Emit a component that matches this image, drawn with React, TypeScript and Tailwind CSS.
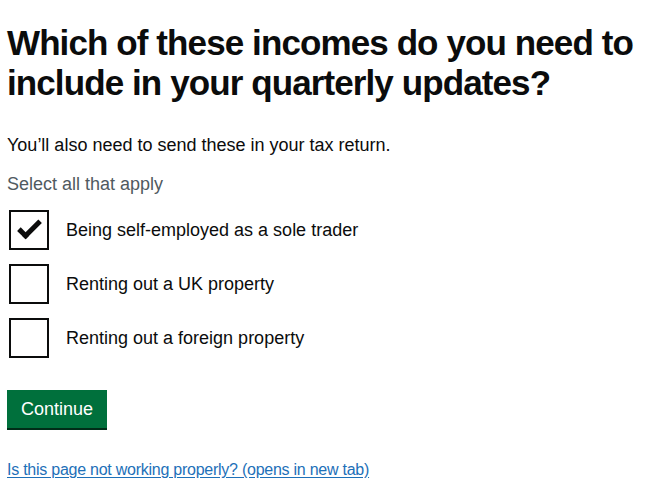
import { useState } from 'react'

const options = [
  { id: 'self-employment', label: 'Being self-employed as a sole trader' },
  { id: 'uk-property', label: 'Renting out a UK property' },
  { id: 'foreign-property', label: 'Renting out a foreign property' },
]

const Checkbox = ({
  label,
  checked,
  onToggle,
}: {
  label: string
  checked: boolean
  onToggle: () => void
}) => (
  <label className="flex cursor-pointer items-center" onClick={onToggle}>
    <span className="relative ml-[2px] h-10 w-10 shrink-0 border-2 border-[#0b0c0c] bg-white">
      {checked && (
        <span className="absolute left-[7px] top-[9px] h-3 w-[23px] -rotate-45 border-b-[5px] border-l-[5px] border-[#0b0c0c]" />
      )}
    </span>
    <span className="ml-[17px] text-[18px] leading-[25px] text-[#0b0c0c]">{label}</span>
  </label>
)

export default function App() {
  const [selected, setSelected] = useState<string[]>(['self-employment'])

  const toggle = (id: string) =>
    setSelected((s) => (s.includes(id) ? s.filter((x) => x !== id) : [...s, id]))

  return (
    <main
      className="min-h-screen bg-white px-[7px] pt-[23px] text-[#0b0c0c]"
      style={{ fontFamily: '"Liberation Sans", Arial, sans-serif' }}
    >
      <h1 className="mb-[30px] text-[35px] font-bold leading-[40px] tracking-[-0.9px]">
        Which of these incomes do you need to include in your quarterly updates?
      </h1>
      <p className="mb-[14px] text-[18px] leading-[25px]">
        You’ll also need to send these in your tax return.
      </p>
      <div className="mb-[13px] text-[18px] leading-[25px] text-[#505a5f]">Select all that apply</div>
      <div className="flex flex-col gap-[14px]">
        {options.map((o) => (
          <Checkbox
            key={o.id}
            label={o.label}
            checked={selected.includes(o.id)}
            onToggle={() => toggle(o.id)}
          />
        ))}
      </div>
      <button className="mt-[32px] block h-[38px] bg-[#00703c] px-[14px] text-[18px] leading-[18px] text-white shadow-[0_2px_0_#002d18]">
        Continue
      </button>
      <a
        href="#"
        className="mt-[32px] block w-fit text-[16px] leading-[20px] tracking-[-0.25px] text-[#1d70b8] underline underline-offset-[2px]"
      >
        Is this page not working properly? (opens in new tab)
      </a>
    </main>
  )
}
